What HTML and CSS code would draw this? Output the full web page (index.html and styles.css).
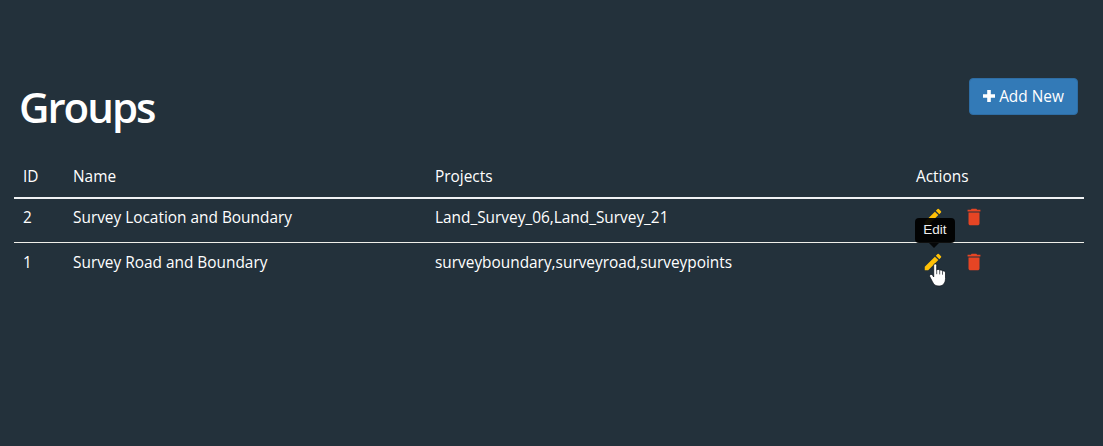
FILE: index.html
```html
<!DOCTYPE html>
<html lang="en">
<head>
<meta charset="utf-8">
<title>Groups</title>
<link rel="stylesheet" href="styles.css">
</head>
<body>
<main class="page">
  <header class="header">
    <h1 class="title">Groups</h1>
    <button class="add-btn"><svg class="plus" viewBox="0 0 12 12"><path d="M4.200 0h3.600v4.200H12v3.600H7.800V12H4.200V7.800H0V4.200h4.200z"/></svg><span>Add New</span></button>
  </header>
  <table class="groups">
    <thead>
      <tr><th class="col-id">ID</th><th class="col-name">Name</th><th class="col-projects">Projects</th><th>Actions</th></tr>
    </thead>
    <tbody>
      <tr>
        <td>2</td><td>Survey Location and Boundary</td><td>Land_Survey_06,Land_Survey_21</td>
        <td><div class="actions">
          <svg class="icon edit" viewBox="0 0 24 24"><path d="M3 17.250V21h3.750L17.810 9.940l-3.750-3.750L3 17.250zM20.710 7.040a1 1 0 0 0 0-1.410l-2.340-2.340a1 1 0 0 0-1.410 0l-1.830 1.830 3.750 3.750 1.830-1.830z"/></svg>
          <svg class="icon delete" viewBox="0 0 24 24"><path d="M6 19c0 1.100.9 2 2 2h8c1.100 0 2-.9 2-2V7H6v12zM19 4h-3.500l-1-1h-5l-1 1H5v2h14V4z"/></svg>
        </div></td>
      </tr>
      <tr>
        <td>1</td><td>Survey Road and Boundary</td><td>surveyboundary,surveyroad,surveypoints</td>
        <td><div class="actions">
          <svg class="icon edit" viewBox="0 0 24 24"><path d="M3 17.250V21h3.750L17.810 9.940l-3.750-3.750L3 17.250zM20.710 7.040a1 1 0 0 0 0-1.410l-2.340-2.340a1 1 0 0 0-1.410 0l-1.830 1.830 3.750 3.750 1.830-1.830z"/></svg>
          <svg class="icon delete" viewBox="0 0 24 24"><path d="M6 19c0 1.100.9 2 2 2h8c1.100 0 2-.9 2-2V7H6v12zM19 4h-3.500l-1-1h-5l-1 1H5v2h14V4z"/></svg>
          <div class="tooltip">Edit</div>
          <svg class="cursor" viewBox="0 0 18 24"><path class="hand" d="M4.700 14V2.400C4.700.4 7.700.4 7.700 2.400V7.100C8.400 6 10.400 6.200 10.700 7.400C11.600 6.600 13.200 6.900 13.500 8.200C14.900 7.500 16.500 8.300 16.500 9.900V15.500C16.500 20 14 23 10.500 23H9C6 23 4.500 21 3.300 18.500L.8 13.800C-.2 11.800 2.400 10.400 3.600 12.300Z"/><path class="creases" d="M7.700 7v4.200M10.700 7.600v3.800M13.500 8.300v3.400"/></svg>
        </div></td>
      </tr>
    </tbody>
  </table>
</main>
</body>
</html>
```
FILE: styles.css
```css
* { box-sizing: border-box; }
body { margin: 0; background: #23313b; color: #fff; font: 15.4px/20px "Open Sans", sans-serif; }
.page { height: 446px; padding: 78px 19px 0 14px; }
.header { display: flex; justify-content: space-between; align-items: flex-start; height: 77px; padding: 0 6px 0 5px; }
.title { margin: 1px 0 0; font-size: 42px; line-height: 56px; font-weight: 600; letter-spacing: -2px; }
.add-btn { display: flex; align-items: center; justify-content: center; gap: 4px; width: 109px; height: 37px; padding: 0; border: 1px solid #2e6da4; border-radius: 4px; background: #337ab7; color: #fff; font: 15.4px/20px "Open Sans", sans-serif; }
.plus { width: 12px; height: 12px; margin-bottom: 1px; fill: #fff; }
.groups { width: 1070px; border-collapse: separate; border-spacing: 0; table-layout: fixed; }
.groups th, .groups td { padding: 0 9px; text-align: left; font-weight: 400; }
.groups th { height: 44px; padding-top: 2px; border-bottom: 2px solid #f0f2f4; }
.groups td { height: 44px; padding-bottom: 5px; }
.groups tbody tr:first-child td { border-bottom: 1px solid #f0f0ea; }
.groups .col-id { width: 50px; }
.groups .col-name { width: 362px; }
.groups .col-projects { width: 481px; }
.actions { position: relative; display: flex; gap: 19.5px; padding-left: 5.5px; margin-top: -2px; }
.icon { width: 22px; height: 22px; }
.edit { fill: #ffc107; }
.delete { fill: #e64524; }
.tooltip { position: absolute; left: -1px; top: -33px; width: 40px; height: 25px; border-radius: 4px; background: rgba(0, 0, 0, 0.94); text-align: center; font: 13.5px/23px "Liberation Sans", sans-serif; color: #eee; }
.tooltip::after { content: ""; position: absolute; left: 14px; top: 25px; border: 5px solid transparent; border-top-color: #050708; border-bottom: 0; }
.cursor { position: absolute; left: 13px; top: 12px; width: 18px; height: 24px; }
.hand { fill: #fff; stroke: #111820; stroke-width: 0.8; }
.creases { fill: none; stroke: #30343a; stroke-width: 0.8; }
```
